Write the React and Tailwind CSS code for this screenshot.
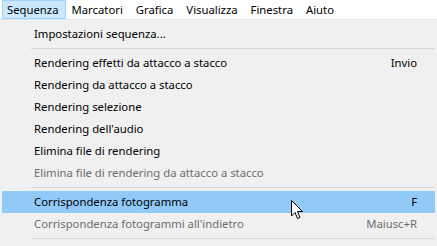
import React from 'react';

const menus = ['Sequenza', 'Marcatori', 'Grafica', 'Visualizza', 'Finestra', 'Aiuto'];

const groups = [
  [{ label: 'Impostazioni sequenza...' }],
  [
    { label: 'Rendering effetti da attacco a stacco', key: 'Invio' },
    { label: 'Rendering da attacco a stacco' },
    { label: 'Rendering selezione' },
    { label: "Rendering dell'audio" },
    { label: 'Elimina file di rendering' },
    { label: 'Elimina file di rendering da attacco a stacco', disabled: true },
  ],
  [
    { label: 'Corrispondenza fotogramma', key: 'F', active: true },
    { label: "Corrispondenza fotogrammi all'indietro", key: 'Maiusc+R', disabled: true },
  ],
];

function Cursor() {
  return (
    <svg width="13" height="20" viewBox="0 0 13 20" className="absolute left-[291px] top-[200px]">
      <path d="M0.5 0.5 L0.5 16 L4 12.5 L6.5 18.5 L9 17.5 L6.5 11.5 L11.5 11.5 Z" fill="#fff" stroke="#000" strokeWidth="1" />
    </svg>
  );
}

function Item({ item }) {
  return (
    <div
      className={
        'flex items-center h-[22px] pl-[32px] pr-[18px] ' +
        (item.active ? 'bg-[#91c9f7] ' : '') +
        (item.disabled ? 'text-[#6d6d6d]' : 'text-black')
      }
    >
      <span className="flex-1">{item.label}</span>
      {item.key && <span>{item.key}</span>}
    </div>
  );
}

export default function App() {
  return (
    <div className="relative w-[437px] h-[246px] bg-[#f0f0f0] overflow-hidden text-[11.3px] leading-none" style={{ fontFamily: '"Noto Sans", sans-serif' }}>
      <div className="flex items-center gap-[1px] h-[20px] bg-white border-b border-[#e5e5e5] px-[2px]">
        {menus.map((m, i) => (
          <div
            key={m}
            className={
              'h-[19px] flex items-center pl-[4px] pr-[6px] ' +
              (i === 0 ? 'bg-[#cce8ff] border border-[#99d1ff]' : 'border border-transparent')
            }
          >
            {m}
          </div>
        ))}
      </div>
      <div className="pt-[3px] px-[2px]">
        {groups.map((g, gi) => (
          <div key={gi}>
            {gi > 0 && <div className="ml-[29px] mr-[1px] my-[3px] h-px bg-[#d7d7d7]" />}
            {g.map(item => (
              <Item key={item.label} item={item} />
            ))}
          </div>
        ))}
        <div className="ml-[29px] mr-[1px] my-[3px] h-px bg-[#d7d7d7]" />
      </div>
      <Cursor />
    </div>
  );
}
